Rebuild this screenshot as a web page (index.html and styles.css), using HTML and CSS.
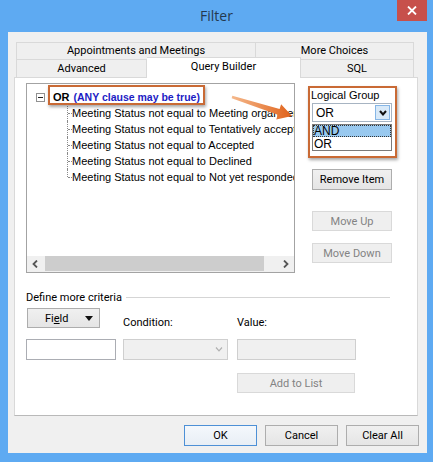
FILE: index.html
```html
<!DOCTYPE html>
<html>
<head>
<meta charset="utf-8">
<title>Filter</title>
<link rel="stylesheet" href="styles.css">
</head>
<body>
<div class="window">
  <div class="titlebar">
    <div class="title">Filter</div>
    <div class="close">
      <svg width="10" height="9" viewBox="0 0 10 9"><path d="M1 0.5 L9 8.5 M9 0.5 L1 8.5" stroke="#fff" stroke-width="1.8" fill="none"/></svg>
    </div>
  </div>
  <div class="client">
    <div class="tabs">
      <div class="tabrow back">
        <div class="tab">Appointments and Meetings</div>
        <div class="tab">More Choices</div>
      </div>
      <div class="tabrow front">
        <div class="tab">Advanced</div>
        <div class="tab selected">Query Builder</div>
        <div class="tab">SQL</div>
      </div>
    </div>
    <div class="panel">
      <div class="upper">
        <div class="tree">
          <div class="tree-list">
            <div class="root"><span class="expander"></span><b>OR</b><b class="any">(ANY clause may be true)</b></div>
            <ul class="children">
              <li>Meeting Status not equal to Meeting organizer</li>
              <li>Meeting Status not equal to Tentatively accepted</li>
              <li>Meeting Status not equal to Accepted</li>
              <li>Meeting Status not equal to Declined</li>
              <li>Meeting Status not equal to Not yet responded</li>
            </ul>
          </div>
          <div class="hscroll">
            <div class="sb-btn"><svg width="6" height="8" viewBox="0 0 6 8"><path d="M5 0.5 L1.5 4 L5 7.5" stroke="#555" stroke-width="1.8" fill="none"/></svg></div>
            <div class="sb-track"><div class="sb-thumb"></div></div>
            <div class="sb-btn"><svg width="6" height="8" viewBox="0 0 6 8"><path d="M1 0.5 L4.5 4 L1 7.5" stroke="#555" stroke-width="1.8" fill="none"/></svg></div>
          </div>
        </div>
        <div class="side">
          <div class="lg-label">Logical Group</div>
          <div class="combo">
            <span class="combo-text">OR</span>
            <span class="combo-btn"><svg width="8" height="6" viewBox="0 0 8 6"><path d="M1 1 L4 4.5 L7 1" stroke="#111" stroke-width="2" fill="none"/></svg></span>
          </div>
          <div class="droplist">
            <div class="opt sel">AND</div>
            <div class="opt">OR</div>
          </div>
          <div class="btn remove">Remove Item</div>
          <div class="btn disabled move-up">Move Up</div>
          <div class="btn disabled move-down">Move Down</div>
        </div>
      </div>
      <div class="define"><span>Define more criteria</span><span class="rule"></span></div>
      <div class="criteria">
        <div class="btn field-btn"><span>Fi<u>e</u>ld</span><span class="tri"></span></div>
        <div class="lbl">Condition:</div>
        <div class="lbl">Value:</div>
        <div class="input field-input"></div>
        <div class="input dis cond">
          <span class="cond-arrow"><svg width="8" height="5" viewBox="0 0 8 5"><path d="M1 0.5 L4 3.8 L7 0.5" stroke="#b0b0b0" stroke-width="1.2" fill="none"/></svg></span>
        </div>
        <div class="input dis value"></div>
        <div class="btn disabled add">Add to List</div>
      </div>
    </div>
    <div class="footer">
      <div class="btn ok">OK</div>
      <div class="btn">Cancel</div>
      <div class="btn">Clear All</div>
    </div>
  </div>

  <div class="hl hl-or"></div>
  <div class="hl hl-lg"></div>
  <svg class="arrow" width="72" height="36" viewBox="0 0 72 36">
    <defs>
      <linearGradient id="ag" x1="0" y1="0" x2="1" y2="0">
        <stop offset="0" stop-color="#f5b98c"/>
        <stop offset="1" stop-color="#e0621a"/>
      </linearGradient>
    </defs>
    <polygon points="6.36,7.86 53.6,20.94 55.12,16.18 66,28 50.28,31.42 51.8,26.66 5.64,10.14" fill="url(#ag)"/>
  </svg>
</div>
</body>
</html>
```
FILE: styles.css
```css
body {
  margin: 0;
  background: #5eaaf2;
}

.window {
  position: relative;
  width: 433px;
  height: 462px;
  background: #5eaaf2;
  font-family: Roboto, "Open Sans", sans-serif;
  font-size: 11px;
  color: #000;
  overflow: hidden;
}

.titlebar {
  height: 32px;
  display: grid;
  grid-template-columns: 1fr auto 1fr;
  align-items: start;
}

.title {
  grid-column: 2;
  font-family: "Open Sans", sans-serif;
  font-size: 14px;
  line-height: 32px;
  color: #24394f;
}

.close {
  grid-column: 3;
  justify-self: end;
  width: 30px;
  height: 21px;
  margin-right: 6px;
  background: #c7504b;
  display: flex;
  align-items: center;
  justify-content: center;
}

.client {
  box-sizing: border-box;
  height: 421px;
  margin: 0 6px 0 8px;
  background: #f0f0f0;
  padding: 10px 9px 0 6px;
}

.tabs {
  margin-left: 2px;
  width: 398px;
}

.tabrow {
  display: grid;
}

.back {
  grid-template-columns: 240px 158px;
  height: 17px;
}

.front {
  grid-template-columns: 131px 154px 113px;
  height: 18px;
}

.tab {
  border: 1px solid #d9d9d9;
  border-bottom: none;
  background: #efefef;
  text-align: center;
  white-space: nowrap;
}

.tab + .tab {
  border-left: none;
}

.back .tab {
  line-height: 16px;
}

.front .tab {
  line-height: 17px;
}

.front .tab.selected {
  background: #fff;
  margin-top: -2px;
  margin-bottom: -1px;
  position: relative;
  z-index: 1;
}

.panel {
  box-sizing: border-box;
  width: 404px;
  height: 339px;
  background: #fff;
  border: 1px solid #d9d9d9;
  border-bottom-color: #b9b9b9;
  padding: 5px 0 0 11px;
}

.upper {
  display: grid;
  grid-template-columns: 269px 80px;
  column-gap: 17px;
  height: 190px;
}

.tree {
  box-sizing: border-box;
  height: 190px;
  border: 1px solid #a3a3a3;
  display: flex;
  flex-direction: column;
}

.tree-list {
  flex: 1;
  overflow: hidden;
  padding-top: 5px;
  font-family: "Liberation Sans", Arial, sans-serif;
  font-size: 11px;
}

.root {
  display: flex;
  align-items: center;
  height: 16px;
  padding-left: 9px;
  white-space: nowrap;
}

.expander {
  box-sizing: border-box;
  width: 9px;
  height: 9px;
  border: 1px solid #919191;
  margin-right: 8px;
  background: linear-gradient(#222, #222) center / 5px 1px no-repeat;
}

.any {
  color: #1c1cc4;
  margin-left: 4px;
  font-size: 10.5px;
}

.children {
  list-style: none;
  margin: 0 0 0 40px;
  padding: 0;
}

.children li {
  position: relative;
  padding-left: 5px;
  height: 16px;
  line-height: 16px;
  white-space: nowrap;
}

.children li::before {
  content: "";
  position: absolute;
  left: 0;
  top: 0;
  bottom: 0;
  border-left: 1px dotted #8a8a8a;
}

.children li:first-child::before {
  top: -2px;
}

.children li:last-child::before {
  bottom: 8px;
}

.children li::after {
  content: "";
  position: absolute;
  left: 1px;
  top: 8px;
  width: 4px;
  border-top: 1px dotted #8a8a8a;
}

.hscroll {
  height: 16px;
  display: flex;
  background: #f0f0f0;
}

.sb-btn {
  width: 16px;
  display: flex;
  align-items: center;
  justify-content: center;
}

.sb-track {
  flex: 1;
  padding-left: 2px;
}

.sb-thumb {
  width: 219px;
  height: 15px;
  background: #cdcdcd;
}

.side {
  display: flex;
  flex-direction: column;
}

.lg-label {
  font-family: "Liberation Sans", Arial, sans-serif;
  font-size: 11px;
  line-height: 14px;
  margin-top: 5px;
  margin-left: -1px;
}

.combo {
  box-sizing: border-box;
  height: 19px;
  margin-top: 1px;
  border: 1px solid #a7b4c2;
  background: #fff;
  display: flex;
  align-items: center;
  font-family: "Liberation Sans", Arial, sans-serif;
  font-size: 12px;
}

.combo-text {
  padding-left: 3px;
}

.combo-btn {
  box-sizing: border-box;
  margin-left: auto;
  margin-right: 1px;
  width: 15px;
  height: 15px;
  background: #d8e9f8;
  border: 1px solid #86b6e6;
  display: flex;
  align-items: center;
  justify-content: center;
}

.droplist {
  box-sizing: border-box;
  height: 27px;
  margin-top: 2px;
  border: 1px solid #7a7a7a;
  background: #fff;
  font-family: "Liberation Sans", Arial, sans-serif;
  font-size: 12px;
}

.opt {
  height: 12px;
  line-height: 12px;
  padding-left: 1px;
}

.opt.sel {
  background: #99c9ef;
  outline: 1px dotted #333;
  outline-offset: -1px;
  height: 12px;
  margin-bottom: 1px;
}

.btn {
  box-sizing: border-box;
  height: 21px;
  border: 1px solid #adadad;
  background: linear-gradient(#f0f0f0, #e5e5e5);
  display: flex;
  align-items: center;
  justify-content: center;
  white-space: nowrap;
}

.btn.disabled {
  background: #efefef;
  border-color: #d9d9d9;
  color: #838383;
}

.remove {
  margin-top: 18px;
}

.move-up {
  margin-top: 21px;
  height: 20px;
}

.move-down {
  margin-top: 12px;
  height: 20px;
}

.define {
  display: flex;
  align-items: center;
  width: 364px;
  height: 14px;
  margin-top: 17px;
}

.define .rule {
  flex: 1;
  border-top: 1px solid #d5d5d5;
  margin-left: 4px;
}

.criteria {
  display: grid;
  grid-template-columns: 97px 114px 119px;
  grid-template-rows: 22px 21px 24px;
  row-gap: 9px;
  margin-top: 4px;
}

.field-btn {
  align-self: start;
  width: 73px;
  height: 20px;
  margin-left: 1px;
  justify-content: flex-start;
  padding-left: 17px;
}

.field-btn u {
  text-decoration-thickness: 1px;
}

.tri {
  margin-left: auto;
  margin-right: 6px;
  width: 0;
  height: 0;
  border-left: 4px solid transparent;
  border-right: 4px solid transparent;
  border-top: 5px solid #111;
}

.lbl {
  align-self: end;
  line-height: 14px;
}

.input {
  box-sizing: border-box;
  height: 21px;
  border: 1px solid #abadb3;
  background: #fff;
}

.field-input {
  width: 90px;
}

.input.dis {
  background: #f0f0f0;
  border-color: #cfcfcf;
}

.cond {
  width: 105px;
  display: flex;
  justify-content: flex-end;
}

.cond-arrow {
  width: 17px;
  display: flex;
  align-items: center;
  justify-content: center;
}

.value {
  width: 119px;
}

.add {
  grid-column: 3;
  width: 118px;
  height: 20px;
  margin-top: 4px;
}

.footer {
  display: flex;
  justify-content: flex-end;
  gap: 8px;
  margin-top: 9px;
  margin-right: -1px;
}

.footer .btn {
  width: 73px;
}

.footer .btn.ok {
  border-color: #4d90d6;
  background: linear-gradient(#f4f8fc, #e8eef5);
}

.hl {
  position: absolute;
  box-sizing: border-box;
  border: 2px solid #c96a35;
  box-shadow: 1px 2px 3px rgba(0, 0, 0, 0.35);
}

.hl-or {
  left: 48px;
  top: 85px;
  width: 157px;
  height: 20px;
}

.hl-lg {
  left: 308px;
  top: 86px;
  width: 89px;
  height: 72px;
}

.arrow {
  position: absolute;
  left: 226px;
  top: 88px;
}
```
